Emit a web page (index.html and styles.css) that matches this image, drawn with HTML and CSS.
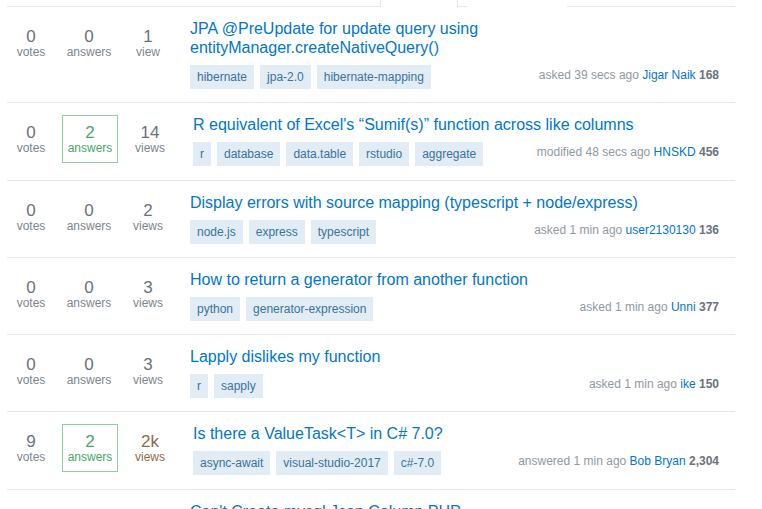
FILE: index.html
```html
<!DOCTYPE html>
<html lang="en">
<head>
<meta charset="utf-8">
<title>Questions</title>
<link rel="stylesheet" href="styles.css">
</head>
<body>
<div class="page">
  <div class="tabs">
    <div class="tab-line tab-line-first"></div>
    <div class="tab-active"></div>
    <div class="tab-line tab-line-short"></div>
    <div class="tab-gap"></div>
    <div class="tab-line tab-line-rest"></div>
  </div>

  <div class="question">
    <div class="stat votes"><div class="num">0</div><div class="lbl">votes</div></div>
    <div class="stat status"><div class="num">0</div><div class="lbl">answers</div></div>
    <div class="stat views"><div class="num">1</div><div class="lbl">view</div></div>
    <div class="summary">
      <a class="title" href="#">JPA @PreUpdate for update query using entityManager.createNativeQuery()</a>
      <div class="meta">
        <div class="tags"><a class="tag" href="#">hibernate</a><a class="tag" href="#">jpa-2.0</a><a class="tag" href="#">hibernate-mapping</a></div>
        <div class="started">asked 39 secs ago <a class="user" href="#">Jigar Naik</a> <span class="rep">168</span></div>
      </div>
    </div>
  </div>

  <div class="question answered-row">
    <div class="stat votes"><div class="num">0</div><div class="lbl">votes</div></div>
    <div class="stat status answered"><div class="num">2</div><div class="lbl">answers</div></div>
    <div class="stat views"><div class="num">14</div><div class="lbl">views</div></div>
    <div class="summary">
      <a class="title" href="#">R equivalent of Excel's “Sumif(s)” function across like columns</a>
      <div class="meta">
        <div class="tags"><a class="tag" href="#">r</a><a class="tag" href="#">database</a><a class="tag" href="#">data.table</a><a class="tag" href="#">rstudio</a><a class="tag" href="#">aggregate</a></div>
        <div class="started">modified 48 secs ago <a class="user" href="#">HNSKD</a> <span class="rep">456</span></div>
      </div>
    </div>
  </div>

  <div class="question">
    <div class="stat votes"><div class="num">0</div><div class="lbl">votes</div></div>
    <div class="stat status"><div class="num">0</div><div class="lbl">answers</div></div>
    <div class="stat views"><div class="num">2</div><div class="lbl">views</div></div>
    <div class="summary">
      <a class="title" href="#">Display errors with source mapping (typescript + node/express)</a>
      <div class="meta">
        <div class="tags"><a class="tag" href="#">node.js</a><a class="tag" href="#">express</a><a class="tag" href="#">typescript</a></div>
        <div class="started">asked 1 min ago <a class="user" href="#">user2130130</a> <span class="rep">136</span></div>
      </div>
    </div>
  </div>

  <div class="question">
    <div class="stat votes"><div class="num">0</div><div class="lbl">votes</div></div>
    <div class="stat status"><div class="num">0</div><div class="lbl">answers</div></div>
    <div class="stat views"><div class="num">3</div><div class="lbl">views</div></div>
    <div class="summary">
      <a class="title" href="#">How to return a generator from another function</a>
      <div class="meta">
        <div class="tags"><a class="tag" href="#">python</a><a class="tag" href="#">generator-expression</a></div>
        <div class="started">asked 1 min ago <a class="user" href="#">Unni</a> <span class="rep">377</span></div>
      </div>
    </div>
  </div>

  <div class="question">
    <div class="stat votes"><div class="num">0</div><div class="lbl">votes</div></div>
    <div class="stat status"><div class="num">0</div><div class="lbl">answers</div></div>
    <div class="stat views"><div class="num">3</div><div class="lbl">views</div></div>
    <div class="summary">
      <a class="title" href="#">Lapply dislikes my function</a>
      <div class="meta">
        <div class="tags"><a class="tag" href="#">r</a><a class="tag" href="#">sapply</a></div>
        <div class="started">asked 1 min ago <a class="user" href="#">ike</a> <span class="rep">150</span></div>
      </div>
    </div>
  </div>

  <div class="question answered-row">
    <div class="stat votes"><div class="num">9</div><div class="lbl">votes</div></div>
    <div class="stat status answered"><div class="num">2</div><div class="lbl">answers</div></div>
    <div class="stat views warm"><div class="num">2k</div><div class="lbl">views</div></div>
    <div class="summary">
      <a class="title" href="#">Is there a ValueTask&lt;T&gt; in C# 7.0?</a>
      <div class="meta">
        <div class="tags"><a class="tag" href="#">async-await</a><a class="tag" href="#">visual-studio-2017</a><a class="tag" href="#">c#-7.0</a></div>
        <div class="started">answered 1 min ago <a class="user" href="#">Bob Bryan</a> <span class="rep">2,304</span></div>
      </div>
    </div>
  </div>

  <div class="question">
    <div class="stat votes"><div class="num">0</div><div class="lbl">votes</div></div>
    <div class="stat status"><div class="num">0</div><div class="lbl">answers</div></div>
    <div class="stat views"><div class="num">2</div><div class="lbl">views</div></div>
    <div class="summary">
      <a class="title" href="#">Can't Create mysql Json Column PHP</a>
      <div class="meta">
        <div class="tags"><a class="tag" href="#">php</a><a class="tag" href="#">mysql</a></div>
        <div class="started">asked 1 min ago <a class="user" href="#">user</a> <span class="rep">1</span></div>
      </div>
    </div>
  </div>
</div>
</body>
</html>
```

FILE: styles.css
```css
html, body {
  margin: 0;
  padding: 0;
  background: #fff;
}
body {
  font-family: "Liberation Sans", Arial, sans-serif;
  color: #242729;
  overflow: hidden;
}
a { text-decoration: none; }

.page {
  margin-left: 7px;
  width: 728px;
}

/* tab strip remnant */
.tabs {
  display: flex;
  height: 7px;
}
.tab-line {
  height: 6px;
  border-bottom: 1px solid #e4e6e8;
}
.tab-line-first { width: 373px; }
.tab-active {
  width: 76px;
  height: 7px;
  border-left: 1px solid #e4e6e8;
  border-right: 1px solid #e4e6e8;
}
.tab-line-short { width: 9px; }
.tab-gap { width: 100px; }
.tab-line-rest { flex: 1; }

/* question row */
.question {
  display: flex;
  align-items: flex-start;
  padding: 12px 0 13px 0;
  border-bottom: 1px solid #e4e6e8;
}
.question.answered-row { padding-bottom: 14px; }

.stat {
  box-sizing: border-box;
  text-align: center;
  padding: 9px 0 7px;
  color: #6a737c;
}
.stat .num {
  font-size: 17px;
  line-height: 17px;
}
.stat .lbl {
  font-size: 12px;
  line-height: 14px;
  color: #7d868e;
}
.votes { width: 48px; }
.status { width: 56px; margin-left: 6px; }
.views { width: 56px; margin-left: 3px; }

.status.answered {
  margin-left: 7px;
  padding: 8px 0 7px;
  border: 1px solid #8fcfa1;
  color: #48a868;
}
.status.answered .lbl { color: #48a868; }
.answered-row .views { margin-left: 4px; }
.views.warm, .views.warm .lbl { color: #8f6b4c; }

.summary {
  flex: 1;
  margin-left: 14px;
  padding-right: 16px;
  min-width: 0;
}
.answered-row .summary { margin-left: 15px; }

.title {
  display: block;
  font-size: 16px;
  line-height: 19px;
  color: #0077cc;
  margin-bottom: 8px;
}

.meta {
  display: flex;
  align-items: center;
  justify-content: space-between;
}
.tags {
  display: flex;
  gap: 6px;
}
.tag {
  display: block;
  height: 24px;
  line-height: 24px;
  padding: 0 7px;
  font-size: 12px;
  color: #39739d;
  background: #e1ecf4;
  white-space: nowrap;
}
.started {
  font-size: 12px;
  line-height: 14px;
  color: #9199a1;
  white-space: nowrap;
  margin-bottom: 5px;
}
.user { color: #0077cc; }
.rep {
  font-weight: bold;
  color: #6a737c;
}
```
